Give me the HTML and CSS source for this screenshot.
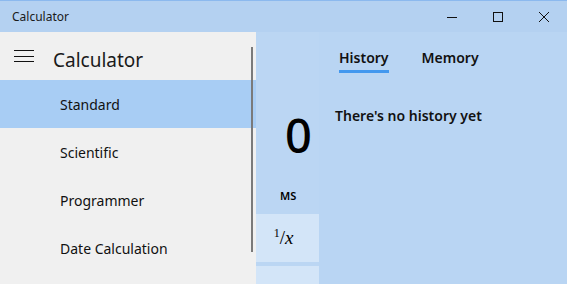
FILE: index.html
```html
<!DOCTYPE html>
<html lang="en">
<head>
    <meta charset="UTF-8">
    <meta name="viewport" content="width=device-width, initial-scale=1.0">
    <title>Calculator</title>
    <link rel="stylesheet" href="styles.css">
</head>
<body>
    <div class="app">
        <div class="titlebar">
            <div class="title">Calculator</div>
            <div class="caption-buttons">
                <div class="caption-btn">
                    <svg width="10" height="10" viewBox="0 0 10 10"><path d="M0 5.5h10" stroke="#111" stroke-width="1"/></svg>
                </div>
                <div class="caption-btn">
                    <svg width="10" height="10" viewBox="0 0 10 10"><rect x="0.5" y="0.5" width="9" height="9" fill="none" stroke="#111" stroke-width="1"/></svg>
                </div>
                <div class="caption-btn">
                    <svg width="10" height="10" viewBox="0 0 10 10"><path d="M0 0L10 10M10 0L0 10" stroke="#111" stroke-width="1"/></svg>
                </div>
            </div>
        </div>

        <div class="window">
            <!-- navigation flyout -->
            <div class="nav">
                <div class="nav-header">
                    <div class="hamburger">
                        <span></span><span></span><span></span>
                    </div>
                    <div class="nav-title">Calculator</div>
                </div>
                <div class="nav-item selected">Standard</div>
                <div class="nav-item">Scientific</div>
                <div class="nav-item">Programmer</div>
                <div class="nav-item">Date Calculation</div>
                <div class="scrollbar"></div>
            </div>

            <!-- calculator behind the flyout -->
            <div class="calc">
                <div class="display">0</div>
                <div class="memory-row">MS</div>
                <div class="key"><span class="frac"><sup>1</sup>/<i>x</i></span></div>
                <div class="key"></div>
            </div>

            <!-- history / memory pane -->
            <div class="history">
                <div class="tabs">
                    <div class="tab active">History</div>
                    <div class="tab">Memory</div>
                </div>
                <div class="empty">There's no history yet</div>
            </div>
        </div>
    </div>
</body>
</html>
```

FILE: styles.css
```css
body {
    margin: 0;
    font-family: "Noto Sans", "Open Sans", sans-serif;
    color: #000;
    overflow: hidden;
}
.app {
    width: 567px;
    height: 284px;
    background: #bbd6f3;
    display: flex;
    flex-direction: column;
}
.titlebar {
    height: 31px;
    flex-shrink: 0;
    border-top: 1px solid #8cb9ee;
    background: #b4d1f1;
    display: flex;
    align-items: center;
    justify-content: space-between;
}
.title {
    padding-left: 12px;
    font-size: 12px;
    color: #1a1a1a;
}
.caption-buttons {
    display: flex;
    height: 100%;
}
.caption-btn {
    width: 46px;
    display: flex;
    align-items: center;
    justify-content: center;
}
.window {
    flex: 1;
    display: flex;
    overflow: hidden;
}
.nav {
    width: 256px;
    flex-shrink: 0;
    background: #f0f0f0;
    position: relative;
}
.nav-header {
    height: 48px;
    display: flex;
    align-items: center;
}
.hamburger {
    width: 20px;
    margin-left: 14px;
    display: flex;
    flex-direction: column;
    gap: 4.5px;
}
.hamburger span {
    display: block;
    height: 1px;
    background: #111;
}
.nav-title {
    margin-left: 19px;
    padding-top: 7px;
    font-size: 19px;
    color: #1a1a1a;
}
.nav-item {
    height: 48px;
    display: flex;
    align-items: center;
    padding-left: 60px;
    font-size: 14px;
    color: #111;
}
.nav-item.selected {
    background: #a8cdf4;
}
.scrollbar {
    position: absolute;
    left: 251px;
    top: 15px;
    width: 2px;
    height: 205px;
    background: #7a7a7a;
}
.calc {
    width: 63px;
    flex-shrink: 0;
    display: flex;
    flex-direction: column;
}
.display {
    height: 130px;
    flex-shrink: 0;
    font-size: 47px;
    font-weight: 500;
    text-align: right;
    padding-right: 7px;
    line-height: 1;
    padding-top: 80px;
    box-sizing: border-box;
    color: #000;
}
.memory-row {
    height: 52px;
    flex-shrink: 0;
    box-sizing: border-box;
    padding-top: 26px;
    padding-left: 24px;
    font-size: 11px;
    font-weight: 600;
}
.key {
    height: 48px;
    margin-bottom: 4px;
    background: #d3e5f8;
    display: flex;
    align-items: center;
    justify-content: center;
    flex-shrink: 0;
}
.frac {
    font-family: "Liberation Serif", serif;
    font-size: 19px;
    margin-left: -8px;
}
.frac sup {
    font-size: 12px;
}
.history {
    flex: 1;
    background: #b9d5f3;
    padding-left: 16px;
}
.tabs {
    display: flex;
    gap: 33px;
    padding-left: 4px;
    padding-top: 16px;
}
.tab {
    font-size: 14px;
    font-weight: 600;
    color: #111;
    padding-bottom: 3px;
    border-bottom: 3px solid transparent;
}
.tab.active {
    border-bottom-color: #4398ee;
}
.empty {
    margin-top: 33px;
    font-size: 14px;
    font-weight: 600;
    color: #111;
}
```
